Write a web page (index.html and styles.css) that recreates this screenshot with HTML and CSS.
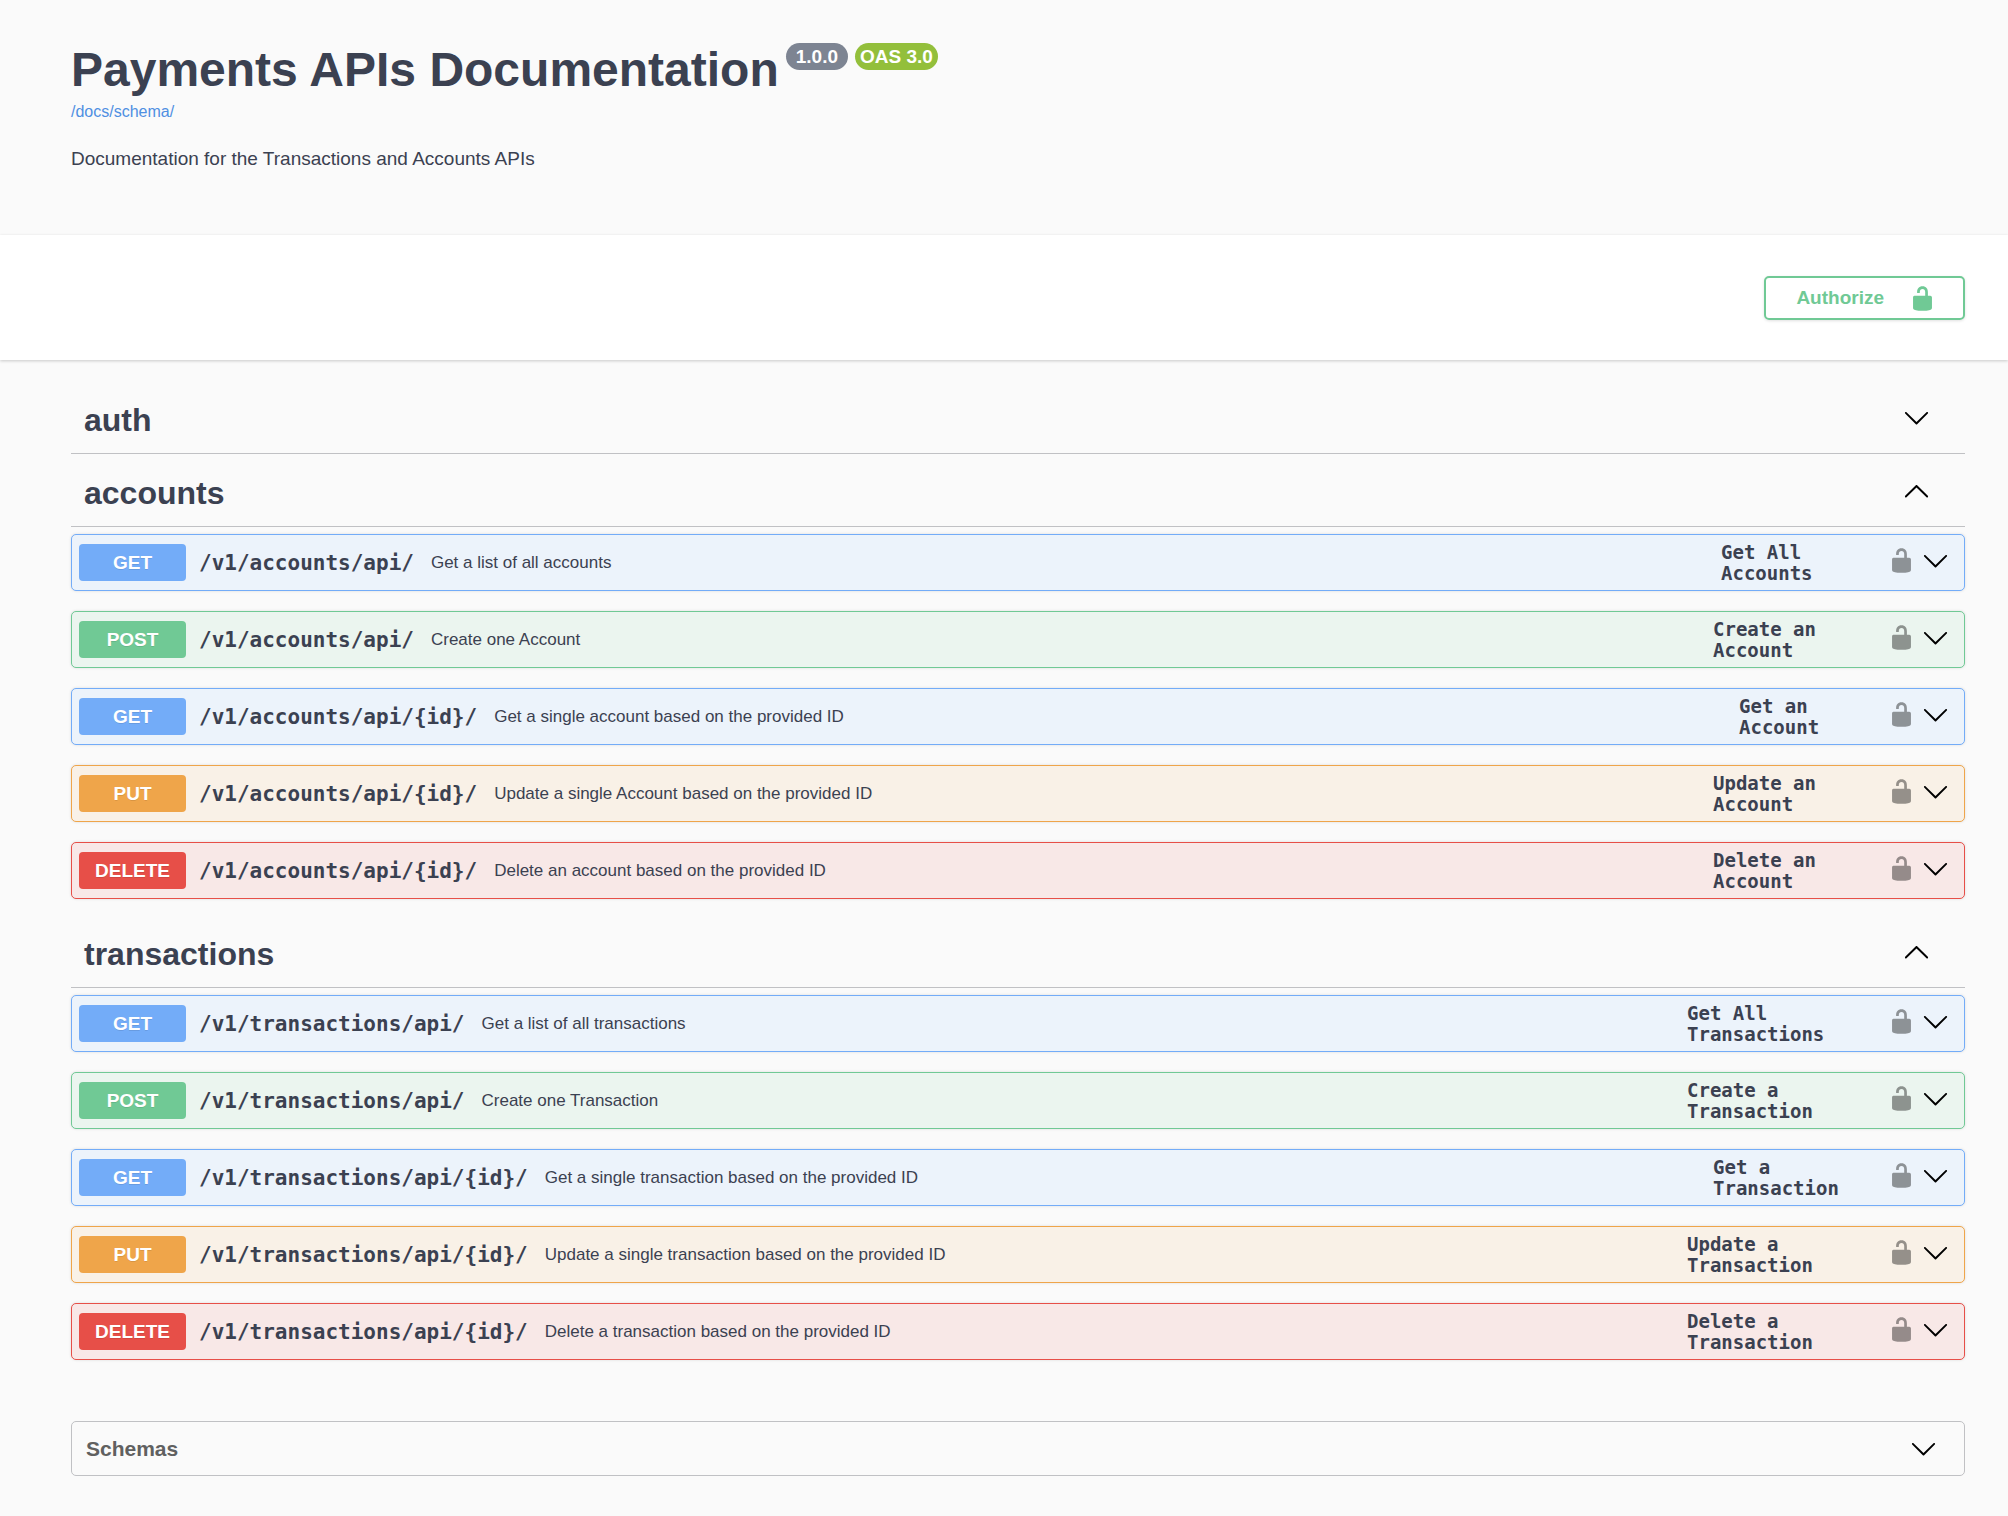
FILE: index.html
```html
<!DOCTYPE html>
<html lang="en">
<head>
<meta charset="utf-8">
<title>Payments APIs Documentation</title>
<link rel="stylesheet" href="styles.css">
</head>
<body>
<svg class="sprite" aria-hidden="true">
  <symbol id="down" viewBox="0 0 20 20"><path d="M17.418 6.109c.272-.268.709-.268.979 0s.271.701 0 .969l-7.908 7.83c-.27.268-.707.268-.979 0l-7.908-7.83c-.27-.268-.27-.701 0-.969.271-.268.709-.268.979 0L10 13.25l7.418-7.141z"/></symbol>
  <symbol id="up" viewBox="0 0 20 20"><path d="M17.418 14.908c.272.268.709.268.979 0s.271-.701 0-.969l-7.908-7.83c-.27-.268-.707-.268-.979 0l-7.908 7.83c-.27.268-.27.701 0 .969.271.268.709.268.979 0L10 7.767l7.418 7.141z"/></symbol>
  <symbol id="unlocked" viewBox="0 0 20 20"><path d="M15.8 8H14V5.6C14 2.703 12.665 1 10 1 7.334 1 6 2.703 6 5.6V6h2v-.801C8 3.754 8.797 3 10 3c1.203 0 2 .754 2 2.199V8H4c-.553 0-1 .646-1 1.199V17c0 .549.428 1.139.951 1.307l1.197.387C5.672 18.861 6.55 19 7.1 19h5.8c.549 0 1.428-.139 1.951-.307l1.196-.387c.524-.167.953-.757.953-1.306V9.199C17 8.646 16.352 8 15.8 8z"/></symbol>
</svg>

<header class="info wrapper">
  <div class="title-row">
    <h1>Payments APIs Documentation</h1>
    <span class="version">1.0.0</span>
    <span class="version oas">OAS 3.0</span>
  </div>
  <a class="schema-link" href="/docs/schema/">/docs/schema/</a>
  <p class="description">Documentation for the Transactions and Accounts APIs</p>
</header>

<section class="scheme wrapper">
  <button class="authorize" type="button"><span>Authorize</span><svg class="icon"><use href="#unlocked"/></svg></button>
</section>

<main class="wrapper">
  <section>
    <div class="tag"><h2>auth</h2><button class="plain" type="button" aria-label="Expand auth"><svg class="icon"><use href="#down"/></svg></button></div>
  </section>

  <section>
    <div class="tag"><h2>accounts</h2><button class="plain" type="button" aria-label="Collapse accounts"><svg class="icon"><use href="#up"/></svg></button></div>
    <div class="operations">
      <div class="op get">
        <button class="summary" type="button"><span class="method">GET</span><span class="path">/v1/accounts/api/</span><span class="text">Get a list of all accounts</span><span class="op-id medium">Get All Accounts</span></button>
        <button class="plain lock" type="button" aria-label="Authorization"><svg class="icon"><use href="#unlocked"/></svg></button>
        <button class="plain" type="button" aria-label="Expand"><svg class="icon"><use href="#down"/></svg></button>
      </div>
      <div class="op post">
        <button class="summary" type="button"><span class="method">POST</span><span class="path">/v1/accounts/api/</span><span class="text">Create one Account</span><span class="op-id wide">Create an Account</span></button>
        <button class="plain lock" type="button" aria-label="Authorization"><svg class="icon"><use href="#unlocked"/></svg></button>
        <button class="plain" type="button" aria-label="Expand"><svg class="icon"><use href="#down"/></svg></button>
      </div>
      <div class="op get">
        <button class="summary" type="button"><span class="method">GET</span><span class="path">/v1/accounts/api/{id}/</span><span class="text">Get a single account based on the provided ID</span><span class="op-id narrow">Get an Account</span></button>
        <button class="plain lock" type="button" aria-label="Authorization"><svg class="icon"><use href="#unlocked"/></svg></button>
        <button class="plain" type="button" aria-label="Expand"><svg class="icon"><use href="#down"/></svg></button>
      </div>
      <div class="op put">
        <button class="summary" type="button"><span class="method">PUT</span><span class="path">/v1/accounts/api/{id}/</span><span class="text">Update a single Account based on the provided ID</span><span class="op-id wide">Update an Account</span></button>
        <button class="plain lock" type="button" aria-label="Authorization"><svg class="icon"><use href="#unlocked"/></svg></button>
        <button class="plain" type="button" aria-label="Expand"><svg class="icon"><use href="#down"/></svg></button>
      </div>
      <div class="op delete">
        <button class="summary" type="button"><span class="method">DELETE</span><span class="path">/v1/accounts/api/{id}/</span><span class="text">Delete an account based on the provided ID</span><span class="op-id wide">Delete an Account</span></button>
        <button class="plain lock" type="button" aria-label="Authorization"><svg class="icon"><use href="#unlocked"/></svg></button>
        <button class="plain" type="button" aria-label="Expand"><svg class="icon"><use href="#down"/></svg></button>
      </div>
    </div>
  </section>

  <section>
    <div class="tag"><h2>transactions</h2><button class="plain" type="button" aria-label="Collapse transactions"><svg class="icon"><use href="#up"/></svg></button></div>
    <div class="operations">
      <div class="op get">
        <button class="summary" type="button"><span class="method">GET</span><span class="path">/v1/transactions/api/</span><span class="text">Get a list of all transactions</span><span class="op-id widest">Get All Transactions</span></button>
        <button class="plain lock" type="button" aria-label="Authorization"><svg class="icon"><use href="#unlocked"/></svg></button>
        <button class="plain" type="button" aria-label="Expand"><svg class="icon"><use href="#down"/></svg></button>
      </div>
      <div class="op post">
        <button class="summary" type="button"><span class="method">POST</span><span class="path">/v1/transactions/api/</span><span class="text">Create one Transaction</span><span class="op-id widest">Create a Transaction</span></button>
        <button class="plain lock" type="button" aria-label="Authorization"><svg class="icon"><use href="#unlocked"/></svg></button>
        <button class="plain" type="button" aria-label="Expand"><svg class="icon"><use href="#down"/></svg></button>
      </div>
      <div class="op get">
        <button class="summary" type="button"><span class="method">GET</span><span class="path">/v1/transactions/api/{id}/</span><span class="text">Get a single transaction based on the provided ID</span><span class="op-id wide">Get a Transaction</span></button>
        <button class="plain lock" type="button" aria-label="Authorization"><svg class="icon"><use href="#unlocked"/></svg></button>
        <button class="plain" type="button" aria-label="Expand"><svg class="icon"><use href="#down"/></svg></button>
      </div>
      <div class="op put">
        <button class="summary" type="button"><span class="method">PUT</span><span class="path">/v1/transactions/api/{id}/</span><span class="text">Update a single transaction based on the provided ID</span><span class="op-id widest">Update a Transaction</span></button>
        <button class="plain lock" type="button" aria-label="Authorization"><svg class="icon"><use href="#unlocked"/></svg></button>
        <button class="plain" type="button" aria-label="Expand"><svg class="icon"><use href="#down"/></svg></button>
      </div>
      <div class="op delete">
        <button class="summary" type="button"><span class="method">DELETE</span><span class="path">/v1/transactions/api/{id}/</span><span class="text">Delete a transaction based on the provided ID</span><span class="op-id widest">Delete a Transaction</span></button>
        <button class="plain lock" type="button" aria-label="Authorization"><svg class="icon"><use href="#unlocked"/></svg></button>
        <button class="plain" type="button" aria-label="Expand"><svg class="icon"><use href="#down"/></svg></button>
      </div>
    </div>
  </section>

  <button class="schemas" type="button"><span>Schemas</span><svg class="icon"><use href="#down"/></svg></button>
</main>
</body>
</html>
```

FILE: styles.css
```css
* {
  box-sizing: border-box;
}

body {
  margin: 0;
  background: #fafafa;
  color: #3b4151;
  font-family: "Liberation Sans", Arial, sans-serif;
}

h1,
h2,
p {
  margin: 0;
}

button {
  margin: 0;
  padding: 0;
  border: 0;
  background: none;
  color: inherit;
  font: inherit;
  text-align: left;
  cursor: pointer;
}

.sprite {
  display: none;
}

.icon {
  display: block;
  width: 27px;
  height: 27px;
  flex: none;
  fill: currentColor;
}

.plain {
  flex: none;
  color: #000;
}

.wrapper {
  padding-left: 71px;
  padding-right: 43px;
}

/* Page heading */
.info {
  display: flex;
  flex-direction: column;
  align-items: flex-start;
  padding-top: 42px;
  padding-bottom: 64px;
}

.title-row {
  display: flex;
  align-items: flex-start;
  gap: 7px;
}

h1 {
  font-size: 48px;
  line-height: 56px;
}

.version {
  margin-top: 1px;
  padding: 0 10px;
  border-radius: 14px;
  background: #7d8492;
  color: #fff;
  font-size: 19px;
  font-weight: 700;
  line-height: 27px;
}

.oas {
  padding: 0 5px;
  background: #93bf3b;
}

.schema-link {
  margin-top: 4px;
  color: #4f8fe2;
  font-size: 16px;
  line-height: 20px;
  text-decoration: none;
}

.description {
  margin-top: 25px;
  font-size: 19px;
  line-height: 24px;
}

/* Authorization bar */
.scheme {
  display: flex;
  justify-content: flex-end;
  padding-top: 41px;
  padding-bottom: 40px;
  background: #fff;
  box-shadow: 0 1px 3px rgba(0, 0, 0, 0.2);
}

.authorize {
  display: flex;
  align-items: center;
  gap: 25px;
  height: 44px;
  padding: 0 27px 0 30px;
  border: 2px solid #70c995;
  border-radius: 5px;
  box-shadow: 0 1px 3px rgba(0, 0, 0, 0.12);
  color: #70c995;
  font-size: 19px;
  font-weight: 700;
}

/* Tag groups */
main {
  padding-top: 21px;
  padding-bottom: 39px;
}

.tag {
  display: flex;
  align-items: center;
  justify-content: space-between;
  height: 73px;
  padding: 0 35px 0 13px;
  border-bottom: 1px solid #c0c1c4;
}

h2 {
  padding-top: 6px;
  font-size: 32px;
  line-height: 38px;
}

.operations {
  display: flex;
  flex-direction: column;
  gap: 20px;
  padding: 7px 0 16px;
}

.op {
  display: flex;
  align-items: center;
  gap: 7px;
  min-height: 57px;
  padding: 0 15px 0 7px;
  border: 1px solid;
  border-radius: 5px;
  box-shadow: 0 0 3px rgba(0, 0, 0, 0.12);
}

.op .plain {
  padding-bottom: 4px;
}

.op .lock {
  color: rgba(0, 0, 0, 0.4);
}

.summary {
  display: flex;
  flex: 1;
  align-items: center;
  min-width: 0;
}

.method {
  flex: none;
  width: 107px;
  margin-right: 13px;
  border-radius: 4px;
  color: #fff;
  font-size: 19px;
  font-weight: 700;
  line-height: 37px;
  text-align: center;
  text-shadow: 0 1px 0 rgba(0, 0, 0, 0.1);
}

.path,
.op-id {
  font-family: "DejaVu Sans Mono", "Liberation Mono", monospace;
  font-weight: 700;
}

.path {
  margin-right: 17px;
  font-size: 21px;
}

.text {
  flex: 1;
  font-size: 17px;
}

.op-id {
  flex: none;
  font-size: 19px;
  line-height: 21px;
}

.narrow {
  width: 142px;
}

.medium {
  width: 160px;
}

.wide {
  width: 168px;
}

.widest {
  width: 194px;
}

.get {
  border-color: #73acf8;
  background: #ecf3fb;
}

.get .method {
  background: #73acf8;
}

.post {
  border-color: #70c995;
  background: #ebf5ef;
}

.post .method {
  background: #70c995;
}

.put {
  border-color: #efa54a;
  background: #f9f1e7;
}

.put .method {
  background: #efa54a;
}

.delete {
  border-color: #e74f48;
  background: #f8e8e7;
}

.delete .method {
  background: #e74f48;
}

/* Schemas panel */
.schemas {
  display: flex;
  align-items: center;
  justify-content: space-between;
  width: 100%;
  height: 55px;
  margin-top: 45px;
  padding: 0 27px 0 14px;
  border: 1px solid #c0c1c4;
  border-radius: 5px;
  color: #606060;
  font-size: 21px;
  font-weight: 700;
}

.schemas .icon {
  color: #000;
}
```
